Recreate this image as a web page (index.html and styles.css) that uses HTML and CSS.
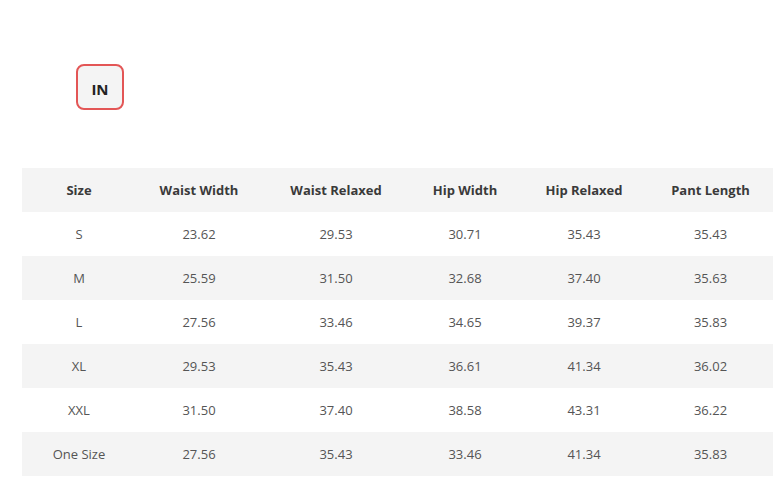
FILE: index.html
```html
<!DOCTYPE html>
<html>
<head>
<meta charset="utf-8">
<link rel="stylesheet" href="styles.css">
</head>
<body>
<div class="page">
  <div class="units">
    <button class="unit active">IN</button>
  </div>
  <table class="size-table">
    <colgroup>
      <col class="c1"><col class="c2"><col class="c3"><col class="c4"><col class="c5"><col class="c6">
    </colgroup>
    <thead>
      <tr><th>Size</th><th>Waist Width</th><th>Waist Relaxed</th><th>Hip Width</th><th>Hip Relaxed</th><th>Pant Length</th></tr>
    </thead>
    <tbody>
      <tr><td>S</td><td>23.62</td><td>29.53</td><td>30.71</td><td>35.43</td><td>35.43</td></tr>
      <tr><td>M</td><td>25.59</td><td>31.50</td><td>32.68</td><td>37.40</td><td>35.63</td></tr>
      <tr><td>L</td><td>27.56</td><td>33.46</td><td>34.65</td><td>39.37</td><td>35.83</td></tr>
      <tr><td>XL</td><td>29.53</td><td>35.43</td><td>36.61</td><td>41.34</td><td>36.02</td></tr>
      <tr><td>XXL</td><td>31.50</td><td>37.40</td><td>38.58</td><td>43.31</td><td>36.22</td></tr>
      <tr><td>One Size</td><td>27.56</td><td>35.43</td><td>33.46</td><td>41.34</td><td>35.83</td></tr>
    </tbody>
  </table>
</div>
</body>
</html>
```
FILE: styles.css
```css
html, body {
  margin: 0;
  padding: 0;
  background: #fff;
}
.page {
  padding: 64px 0 0 22px;
  font-family: "Open Sans", "Liberation Sans", sans-serif;
}
.units {
  display: flex;
  padding-left: 54px;
}
.unit {
  width: 48px;
  height: 46px;
  box-sizing: border-box;
  border: 2px solid #e35656;
  border-radius: 8px;
  background: #f4f4f4;
  font-family: "Open Sans", "Liberation Sans", sans-serif;
  font-weight: 700;
  font-size: 15px;
  color: #222;
  padding: 3px 0 0;
}
.size-table {
  margin-top: 58px;
  width: 751px;
  border-collapse: collapse;
  table-layout: fixed;
  font-size: 13px;
}
.c1 { width: 114px; }
.c2 { width: 126px; }
.c3 { width: 148px; }
.c4 { width: 110px; }
.c5 { width: 128px; }
.c6 { width: 125px; }
.size-table th,
.size-table td {
  height: 44px;
  padding: 0;
  text-align: center;
  vertical-align: middle;
}
.size-table th {
  background: #f4f4f4;
  font-weight: 700;
  color: #3a3a3a;
}
.size-table td {
  color: #555;
}
.size-table tbody tr:nth-child(even) td {
  background: #f4f4f4;
}
```
